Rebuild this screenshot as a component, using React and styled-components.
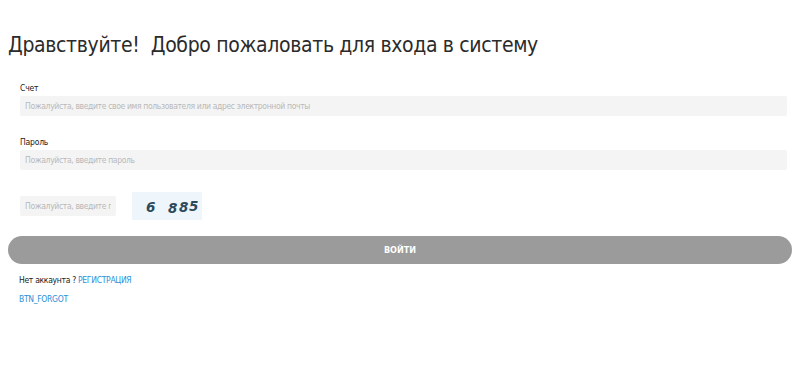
import styled, { createGlobalStyle } from "styled-components";

const GlobalStyle = createGlobalStyle`
  body {
    margin: 0;
    background: #fff;
    font-family: "DejaVu Sans Condensed", "Liberation Sans", sans-serif;
    color: #333;
  }
`;

const Page = styled.div`
  padding: 0 8px;
`;

const Title = styled.h1`
  margin: 0;
  padding-top: 31px;
  font-size: 21px;
  font-weight: normal;
  line-height: 28px;
  letter-spacing: -0.35px;
  color: #2b2b2b;
  white-space: pre;
`;

const Form = styled.form`
  display: flex;
  flex-direction: column;
  padding: 24px 5px 0 12px;
`;

const Field = styled.div`
  display: flex;
  flex-direction: column;
  gap: 3px;
  margin-bottom: ${(p) => p.$gap || 0}px;
`;

const Label = styled.label`
  font-size: 8.5px;
  line-height: 10px;
  letter-spacing: -0.2px;
  color: #222;
`;

const Input = styled.input`
  box-sizing: border-box;
  width: ${(p) => p.$width || "100%"};
  height: 20px;
  border: none;
  border-radius: 2px;
  background: #f4f4f4;
  padding: 0 5px;
  font-family: inherit;
  font-size: 8.5px;
  letter-spacing: -0.35px;
  color: #333;
  outline: none;

  &::placeholder {
    color: #b9b9b9;
  }
`;

const CaptchaRow = styled.div`
  display: flex;
  align-items: center;
  gap: 16px;
  margin-top: 22px;
`;

const Captcha = styled.div`
  width: 70px;
  height: 28px;
  background: #eef6fb;
  display: flex;
  align-items: center;
  justify-content: center;
`;

const Button = styled.button`
  display: block;
  width: 100%;
  height: 28px;
  margin-top: 16px;
  border: none;
  border-radius: 14px;
  background: #9b9b9b;
  color: #fff;
  font-family: inherit;
  font-size: 9px;
  font-weight: bold;
  text-transform: uppercase;
`;

const Links = styled.div`
  display: flex;
  flex-direction: column;
  gap: 10px;
  padding: 12px 0 0 11px;
  font-size: 8.5px;
  line-height: 9px;
  letter-spacing: -0.3px;
  color: #222;
`;

const Link = styled.a`
  color: #2b8fd9;
  text-decoration: none;
  text-transform: uppercase;
`;

const CaptchaImage = () => (
  <svg width="70" height="28" viewBox="0 0 70 28">
    <g fill="#2c4a5b" fontFamily="DejaVu Sans, sans-serif" fontWeight="bold" fontStyle="italic" fontSize="13.5">
      <text x="14" y="20">6</text>
      <text x="36" y="21">8</text>
      <text x="47" y="20">8</text>
      <text x="57" y="19">5</text>
    </g>
  </svg>
);

const App = () => {
  return (
    <Page>
      <GlobalStyle />
      <Title>Дравствуйте!  Добро пожаловать для входа в систему</Title>
      <Form onSubmit={(e) => e.preventDefault()}>
        <Field $gap={21}>
          <Label>Счет</Label>
          <Input placeholder="Пожалуйста, введите свое имя пользователя или адрес электронной почты" />
        </Field>
        <Field>
          <Label>Пароль</Label>
          <Input type="password" placeholder="Пожалуйста, введите пароль" />
        </Field>
        <CaptchaRow>
          <Input $width="96px" placeholder="Пожалуйста, введите проверочный код" />
          <Captcha>
            <CaptchaImage />
          </Captcha>
        </CaptchaRow>
      </Form>
      <Button type="button">войти</Button>
      <Links>
        <span>
          Нет аккаунта ? <Link href="#">Регистрация</Link>
        </span>
        <span>
          <Link href="#">BTN_FORGOT</Link>
        </span>
      </Links>
    </Page>
  );
};

export default App;
